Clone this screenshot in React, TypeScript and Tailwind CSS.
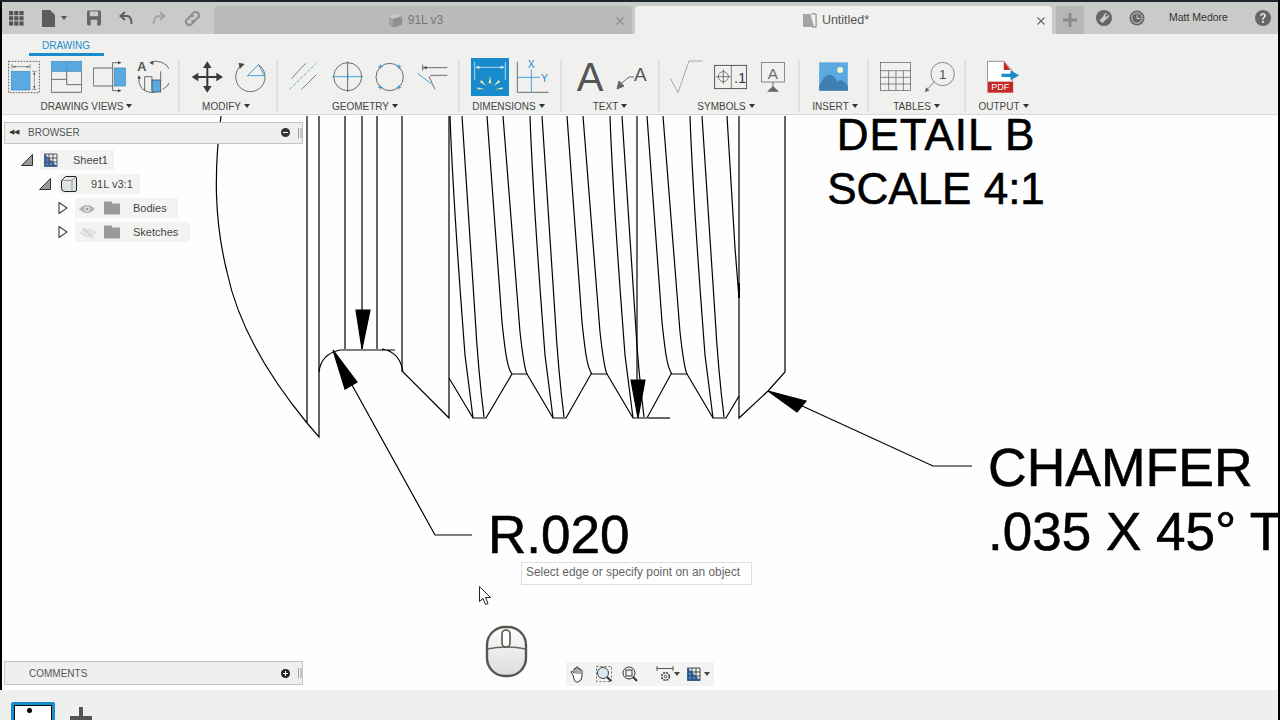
import type { ReactNode } from "react";

const FONT = "font-['Liberation_Sans',Arial,sans-serif]";
const BLUE = "#5aa9e0";
const CYAN = "#1b8ccb";
const DARK = "#4a4a4a";

// Icons are drawn in the 3x units of the zoomed toolbar, 114 units = 38px of row height
function Ic({ x, w, children, className = "" }: { x: number; w: number; className?: string; children: ReactNode }) {
  return (
    <svg
      viewBox={`${x} 174 ${w} 114`}
      width={w / 3}
      height={38}
      className={`shrink-0 ${className}`}
      fill="none"
      stroke={DARK}
      strokeWidth={2.4}
    >
      {children}
    </svg>
  );
}

function Caret() {
  return <span className="ml-[3px] inline-block h-0 w-0 border-x-[3px] border-t-[4px] border-x-transparent border-t-[#333] align-[2px]" />;
}

function Group({ cls, label, pad, lc = "", last, children }: { cls: string; label: string; pad: string; lc?: string; last?: boolean; children: ReactNode }) {
  return (
    <div className={`relative flex h-full shrink-0 flex-col ${cls}`}>
      <div className={`flex h-[38px] items-start ${pad}`}>{children}</div>
      <div className={`mt-[4px] text-center text-[10px] leading-[14px] text-[#444] ${lc}`}>
        {label}
        <Caret />
      </div>
      {!last && <div className="absolute right-[-1px] top-[2px] h-[52px] w-[2px] bg-[#dfe0de]" />}
    </div>
  );
}

function Cross({ className, color }: { className: string; color: string }) {
  return (
    <svg viewBox="0 0 8 8" className={`absolute h-[8px] w-[8px] ${className}`} fill="none" stroke={color} strokeWidth="1.1">
      <path d="M0.5 0.5L7.5 7.5M7.5 0.5L0.5 7.5" />
    </svg>
  );
}

function TitleIcons() {
  return (
    <div className="flex h-full w-[214px] shrink-0 items-center pl-[9px]">
      <svg viewBox="0 0 15 15" className="h-[15px] w-[15px]" fill="#555">
        {[0, 5.2, 10.4].flatMap((a) => [0, 5.2, 10.4].map((b) => <rect key={`${a}-${b}`} x={a} y={b} width="4.2" height="4.2" />))}
      </svg>
      <svg viewBox="0 0 13 17" className="ml-[18px] h-[17px] w-[13px]" fill="#5c5c5c">
        <path d="M0 0H8L13 5V17H0Z" />
      </svg>
      <span className="ml-[6px] h-0 w-0 border-x-[3px] border-t-[4px] border-x-transparent border-t-[#555]" />
      <svg viewBox="0 0 15 16" className="ml-[20px] h-[16px] w-[14px]" fill="#666">
        <path fillRule="evenodd" d="M1.5 0H13.5A1.5 1.5 0 0 1 15 1.5V14.5A1.5 1.5 0 0 1 13.5 16H1.5A1.5 1.5 0 0 1 0 14.5V1.5A1.5 1.5 0 0 1 1.5 0ZM3 1V6H12V1ZM4 10V16H11V10Z" />
      </svg>
      <svg viewBox="0 0 14 14" className="ml-[18px] h-[14px] w-[14px]" fill="none" stroke="#5c5c5c" strokeWidth="2">
        <path d="M6 1L1.5 5L6 9" />
        <path d="M2 5H8Q12.5 5 12.5 13" />
      </svg>
      <svg viewBox="0 0 14 14" className="ml-[19px] h-[14px] w-[14px]" fill="none" stroke="#a3a5a3" strokeWidth="2">
        <path d="M8 1L12.5 5L8 9" />
        <path d="M12 5H7Q2 5 1.5 13" />
      </svg>
      <svg viewBox="0 0 17 17" className="ml-[18px] h-[17px] w-[17px]" fill="none" stroke="#8e908e" strokeWidth="2.2">
        <path d="M7 5L10 2.5Q12 1 14 3T14.5 7L11 10.5Q9 12 7.5 10.5" />
        <path d="M10 12L7 14.5Q5 16 3 14T2.5 10L6 6.5Q8 5 9.5 6.5" />
      </svg>
    </div>
  );
}

function Tabs() {
  return (
    <div className="flex h-[32px] items-end bg-[#c9cbc8]">
      <TitleIcons />
      <div className="relative flex h-[28px] w-[418px] items-center justify-center rounded-t-[4px] bg-[#b9bbb9] pr-[15px]">
        <svg viewBox="0 0 16 15" className="mr-[5px] h-[15px] w-[15px]">
          <path d="M1 3L11 0L15 3L5 6Z" fill="#c6c8c6" />
          <path d="M1 3L5 6V15L1 12Z" fill="#a3a5a3" />
          <path d="M5 6L15 3V12L5 15Z" fill="#8f918f" />
        </svg>
        <span className="text-[12px] text-[#777]">91L v3</span>
        <Cross className="right-[8px] top-[11px]" color="#8a8c8a" />
      </div>
      <div className="relative ml-[3px] flex h-[28px] w-[417px] items-center justify-center rounded-t-[4px] bg-[#f0f1ef] pr-[16px]">
        <svg viewBox="0 0 16 16" className="mr-[5px] h-[15px] w-[15px]">
          <path d="M1 1H9L13 15H1Z" fill="#a3a5a3" />
          <path d="M10 1H15M15 1V15M11 15H15" stroke="#777" fill="none" />
        </svg>
        <span className="text-[12.5px] text-[#555]">Untitled*</span>
        <Cross className="right-[7px] top-[11px]" color="#666" />
      </div>
      <div className="ml-[4px] flex h-[28px] w-[28px] items-center justify-center bg-[#b5b7b5]">
        <svg viewBox="0 0 14 14" className="h-[14px] w-[14px]" fill="#8a8c8a">
          <path d="M5.5 0H8.5V5.5H14V8.5H8.5V14H5.5V8.5H0V5.5H5.5Z" />
        </svg>
      </div>
      <div className="flex h-[32px] flex-1 items-center">
        <svg viewBox="0 0 16 16" className="ml-[12px] h-[16px] w-[16px]">
          <circle cx="8" cy="8" r="8" fill="#666" />
          <path d="M11.5 3L9 5.5L10.5 7L13 4.5Q13.5 7.5 11 8.5L6.5 13L3.5 10.5L7.5 6Q8 2.8 11.5 3Z" fill="#c9cbc8" />
        </svg>
        <svg viewBox="0 0 16 16" className="ml-[17px] h-[16px] w-[16px]" fill="none">
          <circle cx="8" cy="8" r="7.5" fill="#666" />
          <circle cx="8" cy="8" r="5.3" stroke="#c9cbc8" strokeWidth="1" />
          <path d="M8 4.5V8.5H11.5" stroke="#c9cbc8" strokeWidth="1" />
        </svg>
        <span className="ml-[24px] text-[10.5px] text-[#333]">Matt Medore</span>
        <svg viewBox="0 0 16 16" className="ml-[27px] h-[16px] w-[16px]">
          <circle cx="8" cy="8" r="8" fill="#666" />
          <path d="M5.2 6Q5.4 3 8 3T10.9 5.7Q10.9 7 9.4 7.9Q8.6 8.5 8.6 10H7.1Q7.1 7.9 8.4 7Q9.2 6.4 9.2 5.7T8 4.6T6.8 6ZM7 11H8.8V13H7Z" fill="#e4e5e3" />
        </svg>
      </div>
    </div>
  );
}

function Ribbon() {
  return (
    <div className="h-[81px] border-b border-[#d8d8d6] bg-[#f0f1ef]">
      <div className="relative h-[23px]">
        <span className="absolute left-[42px] top-[4px] text-[10px] text-[#1b8ccb]">DRAWING</span>
        <span className="absolute bottom-[1px] left-[29px] h-[3px] w-[75px] bg-[#1b8ccb]" />
      </div>
      <div className="flex h-[58px] items-start pt-[1px]">
        <Group cls="w-[179px]" label="DRAWING VIEWS" pad="pl-[8px]" lc="pr-[6px]">
          <Ic x={24} w={96}>
            <rect x="26" y="184" width="92" height="94" strokeDasharray="5 4" stroke="#333" />
            <rect x="34" y="214" width="56" height="56" fill={BLUE} stroke="#4b8fc0" />
            <path d="M38 200H88M36 192V208M90 192V208M103 216V266M96 214H110M96 268H110" strokeWidth="1.6" />
            <path d="M38 200L46 197V203ZM88 200L80 197V203ZM103 216L100 224H106ZM103 266L100 258H106Z" fill={DARK} strokeWidth="0" />
          </Ic>
          <Ic x={153} w={94} className="ml-[11px]">
            <rect x="154" y="184" width="91" height="30" fill={BLUE} stroke="#4b8fc0" />
            <path d="M200 184V214" stroke="#4b8fc0" />
            <path d="M154 214V277H245V214M154 238H200V254H245M200 214V238" />
          </Ic>
          <Ic x={281} w={98} className="ml-[11px]">
            <path d="M340 204H282V258H340" />
            <rect x="345" y="204" width="33" height="54" fill={BLUE} stroke="#4b8fc0" />
            <path d="M340 188V272M340 188H358M340 272H358" />
            <path d="M367 188L356 183V193ZM367 272L356 267V277Z" fill={DARK} strokeWidth="0" />
          </Ic>
          <Ic x={410} w={100} className="ml-[10px]">
            <text x="414" y="213" fontSize="38" fontWeight="700" fill="#555" stroke="none" fontFamily="Liberation Sans">A</text>
            <path d="M452 188A44 44 0 0 1 490 268M478 272Q450 285 428 266Q416 252 419 232" />
            <path d="M450 188L462 182V195ZM419 225L414 236H425Z" fill={DARK} strokeWidth="0" />
            <path d="M436 272V230H458V272" />
            <rect x="458" y="240" width="26" height="36" fill={BLUE} />
            <path d="M484 240V214" />
          </Ic>
        </Group>
        <Group cls="w-[98px]" label="MODIFY" pad="pl-[12px]" lc="pr-[4px]">
          <Ic x={572} w={98}>
            <path d="M621 190V272M580 231H662" strokeWidth="6" stroke="#3a3a3a" />
            <path d="M621 184L608 204H634ZM621 278L608 258H634ZM574 231L594 218V244ZM668 231L648 218V244Z" fill="#3a3a3a" stroke="none" />
          </Ic>
          <Ic x={702} w={96} className="ml-[10px]">
            <path d="M722 198A44 44 0 1 0 775 194" />
            <path d="M716 188L734 192L719 207Z" fill={DARK} strokeWidth="0" />
            <path d="M742 227L776 194L793 227Z" stroke={CYAN} />
          </Ic>
        </Group>
        <Group cls="w-[182px]" label="GEOMETRY" pad="pl-[12px]" lc="pr-[6px]">
          <Ic x={868} w={86}>
            <path d="M875 236L918 190M906 268L950 224" strokeWidth="2" />
            <path d="M870 268L950 190" stroke={CYAN} strokeWidth="2" strokeDasharray="10 5" />
          </Ic>
          <Ic x={30} w={100} className="ml-[13px]">
            <circle cx="80" cy="230" r="42" />
            <path d="M80 184V276" stroke={DARK} />
            <path d="M34 230H126M80 221V239" stroke={CYAN} />
          </Ic>
          <Ic x={163} w={94} className="ml-[10px]">
            <circle cx="210" cy="231" r="41" />
            <path d="M175 200H189M182 193V207M231 200H245M238 193V207M175 262H189M182 255V269M231 262H245M238 255V269" stroke={CYAN} />
          </Ic>
          <Ic x={290} w={98} className="ml-[11px]">
            <path d="M310 203H384M310 194V212M335 226H384M335 226L330 232L347 268" />
            <path d="M310 203L322 198V208Z" fill={DARK} strokeWidth="0" />
            <path d="M295 220L336 252" stroke={CYAN} />
          </Ic>
        </Group>
        <Group cls="w-[102px]" label="DIMENSIONS" pad="pl-[12px]" lc="pr-[3px]">
          <svg viewBox="453 174 114 114" width={38} height={38} className="shrink-0" fill="none">
            <rect x="453" y="174" width="114" height="114" fill="#188bcc" />
            <path d="M464 186V240M556 186V240M468 202H552" stroke="#d8ebf5" strokeWidth="2.4" />
            <path d="M466 202L478 197V207ZM554 202L542 197V207Z" fill="#d8ebf5" />
            <path d="M510 228L506 250H514ZM484 240L480 246L499 258ZM536 240L540 246L521 258ZM472 268H494L472 262ZM548 268H526L548 262Z" fill="#f3eba6" />
          </svg>
          <Ic x={588} w={102} className="ml-[7px]">
            <path d="M592 185V277H686" />
            <path d="M634 208V277M592 232H660" stroke={CYAN} />
            <text x="623" y="205" fontSize="31" fill={CYAN} stroke="none" fontFamily="Liberation Sans">X</text>
            <text x="663" y="245" fontSize="31" fill={CYAN} stroke="none" fontFamily="Liberation Sans">Y</text>
          </Ic>
        </Group>
        <Group cls="w-[98px]" label="TEXT" pad="pl-[14px]">
          <div className="h-[38px] w-[30px] text-center text-[40px] leading-[39px] text-[#555]">A</div>
          <svg viewBox="0 -4 32 30" width={32} height={30} className="ml-[11px] mt-[4px] shrink-0" fill="none" stroke="#666" strokeWidth="1">
            <path d="M2 20L13 11H18" />
            <path d="M1 23L3 15L8 20Z" fill="#666" />
            <text x="18" y="15" fontSize="19" fill="#555" stroke="none" fontFamily="Liberation Sans">A</text>
          </svg>
        </Group>
        <Group cls="w-[140px]" label="SYMBOLS" pad="pl-[10px]" lc="pr-[6px]">
          <Ic x={88} w={104}>
            <path d="M92 235L115 278L148 183H188" strokeWidth="1.6" stroke="#666" />
          </Ic>
          <Ic x={220} w={100} className="ml-[10px]">
            <rect x="222" y="196" width="96" height="70" stroke="#333" />
            <path d="M272 196V266M248 208V252M226 230H270" stroke="#333" strokeWidth="1.8" />
            <circle cx="248" cy="230" r="15" stroke="#333" strokeWidth="1.8" />
            <text x="280" y="249" fontSize="44" fill="#333" stroke="none" fontFamily="Liberation Sans">.1</text>
          </Ic>
          <Ic x={362} w={72} className="ml-[14px]">
            <rect x="364" y="187" width="68" height="59" stroke="#555" strokeWidth="2" />
            <text x="382" y="236" fontSize="46" fill="#666" stroke="none" fontFamily="Liberation Sans">A</text>
            <path d="M398 246V260" />
            <path d="M380 275H416L398 258Z" fill="#666" stroke="none" />
          </Ic>
        </Group>
        <Group cls="w-[69px]" label="INSERT" pad="pl-[20px]" lc="pl-[3px]">
          <svg viewBox="537 174 86 114" width={29} height={38} className="shrink-0">
            <rect x="537" y="187" width="86" height="85" fill={BLUE} />
            <path d="M537 258Q552 226 567 224Q582 224 592 246Q604 232 623 258V272H537Z" fill="#3f7fb3" />
            <circle cx="600" cy="210" r="9" fill="#f1f6c8" />
          </svg>
        </Group>
        <Group cls="w-[97px]" label="TABLES" pad="pl-[12px]">
          <Ic x={720} w={94}>
            <rect x="721" y="187" width="91" height="85" stroke="#555" strokeWidth="2" />
            <path d="M721 212H812M721 232H812M721 252H812M746 212V272M768 212V272M790 212V272" stroke="#555" strokeWidth="2" />
          </Ic>
          <Ic x={850} w={94} className="ml-[13px]">
            <circle cx="906" cy="222" r="35" stroke="#555" strokeWidth="2" />
            <path d="M880 246L860 268" stroke="#666" />
            <path d="M852 276L857 262L866 272Z" fill="#666" stroke="none" />
            <text x="895" y="236" fontSize="40" fill="#555" stroke="none" fontFamily="Liberation Sans">1</text>
          </Ic>
        </Group>
        <Group cls="w-[75px]" label="OUTPUT" pad="pl-[22px]" lc="pl-[2px]" last>
          <svg viewBox="1040 174 98 114" width={33} height={38} className="shrink-0" fill="none">
            <path d="M1041 245V184H1090L1115 210V245" stroke="#666" strokeWidth="2" fill="#fff" />
            <path d="M1090 184V210H1110Z" fill="#c62828" />
            <rect x="1041" y="245" width="77" height="33" fill="#c62828" />
            <text x="1052" y="271" fontSize="27" fill="#fff" fontFamily="Liberation Sans">PDF</text>
            <path d="M1083 226H1112" stroke="#1b8ccb" strokeWidth="10" />
            <path d="M1136 226L1110 211V241Z" fill="#1b8ccb" />
          </svg>
        </Group>
      </div>
    </div>
  );
}

// thread flanks repeat every 80px across the drawing
const FLANK_A = "M450 116C453 200 458 262 465 355L473 418";
const FLANK_B = "M462 116L475 315C477 350 480 385 484 417";
const FLANK_C = "M487 116L502 322C505 350 507 368 512 374";
const FLANK_D = "M503 116L520 332C522 350 524 368 527 374";

function Drawing() {
  return (
    <svg viewBox="0 115 1280 575" className="absolute inset-0 h-full w-full" fill="none" stroke="#000" strokeWidth="1.2">
      <path d="M221 116C214 170 214 220 227 272C237 320 265 372 307 423L319 437V116M307 116V423" />
      <path d="M319 372Q321 354 340 350H395M382 349Q400 352 403 372L449 418V116" />
      <path d="M345 116V349M362 116V349M377 116V349M402 116V372" />
      <path d="M356 310H370L362 349Z" fill="#000" />
      <path d="M333 350L345 389L357 382Z" fill="#000" />
      <path d="M352 385L435 535H472" />
      {[0, 80, 160].map((dx) => (
        <g key={dx} transform={`translate(${dx} 0)`}>
          <path d={FLANK_A} />
          <path d={FLANK_B} />
          <path d={FLANK_C} />
          <path d={FLANK_D} />
        </g>
      ))}
      <g transform="translate(240 0)">
        <path d={FLANK_A} />
        <path d={FLANK_B} />
        <path d="M487 116L495 248L499 298" />
      </g>
      <path d="M449 378L473 418H486L512 374H527L553 418H566L591 374H607L633 418H647L671 374H687L713 418H726L739 396" />
      <path d="M739 116V418L768 391L785 372V116" />
      <path d="M739 283V298" strokeWidth="2" />
      <path d="M637 116V380" />
      <path d="M631 380H645L638 418Z" fill="#000" />
      <path d="M648 418H670" />
      <path d="M768 391L806 401L797 412Z" fill="#000" />
      <path d="M800 405L933 466H972" />
      <g fill="#000" stroke="#000" strokeWidth="0.6" fontFamily="Liberation Sans">
        <text x="936" y="150" fontSize="44" textAnchor="middle" letterSpacing="1">DETAIL B</text>
        <text x="936" y="204" fontSize="44" textAnchor="middle">SCALE 4:1</text>
        <text x="988" y="486" fontSize="53.5">CHAMFER</text>
        <text x="988" y="550" fontSize="53">.035 X 45° T</text>
        <text x="488" y="553" fontSize="53">R.020</text>
      </g>
    </svg>
  );
}

function Row({ cls, box, label, labelCls, children }: { cls: string; box: string; label: string; labelCls: string; children: ReactNode }) {
  return (
    <div className={`flex h-[24px] items-center ${cls}`}>
      {children}
      <div className={`relative ml-[7px] h-[20px] bg-[#f3f4f2] ${box}`}>
        <span className={`absolute top-[2px] text-[11px] text-[#444] ${labelCls}`}>{label}</span>
      </div>
    </div>
  );
}

const Open = () => (
  <svg viewBox="0 0 12 12" className="h-[12px] w-[12px]">
    <path d="M11.5 0.5V11.5H0.5Z" fill="#9a9a9a" stroke="#333" />
  </svg>
);
const Closed = () => (
  <svg viewBox="0 0 10 12" className="-ml-[1px] h-[12px] w-[10px]">
    <path d="M1 0.5L9 6L1 11.5Z" fill="#fff" stroke="#444" strokeWidth="1.2" />
  </svg>
);
const Grip = () => (
  <svg viewBox="0 0 4 10" className="ml-[8px] h-[10px] w-[4px]" stroke="#888" strokeWidth="0.8">
    <path d="M0.5 0V10M3 0V10" />
  </svg>
);
const Folder = () => (
  <svg viewBox="0 0 16 13" className="h-[14px] w-[16px]" fill="#9b9c9a">
    <path d="M0 0H8V2H16V13H0Z" />
  </svg>
);

function BrowserPanel() {
  return (
    <div className="absolute bottom-[5px] left-[4px] top-[7px] flex w-[299px] flex-col">
      <div className="flex h-[22px] items-center border border-[#c4c5c3] bg-[#eff0ee] pb-[1px] pl-[4px]">
        <span className="mr-[9px] text-[7px] text-[#333]">◀◀</span>
        <span className="flex-1 text-[10px] text-[#555]">BROWSER</span>
        <span className="relative h-[9px] w-[9px] rounded-full bg-[#333]">
          <span className="absolute left-[2px] top-[4px] h-[1px] w-[5px] bg-white" />
        </span>
        <Grip />
      </div>
      <div className="mt-[4px] flex flex-col">
        <Row cls="ml-[17px]" box="w-[74px]" label="Sheet1" labelCls="left-[33px]">
          <Open />
        </Row>
        <Row cls="ml-[35px]" box="w-[82px]" label="91L v3:1" labelCls="left-[33px]">
          <Open />
        </Row>
        <Row cls="ml-[55px]" box="w-[103px]" label="Bodies" labelCls="left-[58px]">
          <Closed />
        </Row>
        <Row cls="ml-[55px]" box="w-[115px]" label="Sketches" labelCls="left-[58px]">
          <Closed />
        </Row>
      </div>
      {/* row icons sit over the tree rows */}
      <svg viewBox="0 0 14 14" className="absolute left-[40px] top-[31px] h-[14px] w-[14px]" fill="none">
        <path d="M0 0V14H14Z" fill="#4d7fd0" />
        <path d="M1 1H13V13H1ZM5 1V13M9 1V13M1 5H13M1 9H13" stroke="#444" strokeWidth="0.9" />
      </svg>
      <svg viewBox="0 0 16 16" className="absolute left-[57px] top-[54px] h-[16px] w-[16px]" fill="none">
        <path d="M0.5 4.5L4.5 0.5H14Q15.5 0.5 15.5 2V14Q15.5 15.5 14 15.5H4Q0.5 15.5 0.5 12Z" fill="#dfe3e5" stroke="#222" />
        <path d="M0.5 4.5H11V15.5M11 4.5L15 1" stroke="#777" strokeWidth="0.7" />
      </svg>
      <svg viewBox="0 0 16 10" className="absolute left-[75px] top-[82px] h-[10px] w-[16px]">
        <path d="M0 5Q8 -3 16 5Q8 13 0 5Z" fill="#b3b4b2" />
        <circle cx="8" cy="5" r="2.6" fill="#f3f4f2" />
        <circle cx="8" cy="5" r="1.5" fill="#999" />
      </svg>
      <div className="absolute left-[100px] top-[79px]">
        <Folder />
      </div>
      <svg viewBox="0 0 16 12" className="absolute left-[76px] top-[105px] h-[12px] w-[16px]" stroke="#dcdddb" fill="#e6e7e5">
        <path d="M0 6Q8 -2 16 6Q8 14 0 6Z" />
        <path d="M3 1L13 11" stroke="#cfd0ce" strokeWidth="1.5" />
      </svg>
      <div className="absolute left-[100px] top-[103px]">
        <Folder />
      </div>

      <div className="mt-auto flex h-[24px] items-center border border-[#c4c5c3] bg-[#eff0ee] pl-[24px]">
        <span className="flex-1 text-[10px] text-[#555]">COMMENTS</span>
        <span className="relative h-[9px] w-[9px] rounded-full bg-[#222]">
          <span className="absolute left-[2px] top-[4px] h-[1px] w-[5px] bg-white" />
          <span className="absolute left-[4px] top-[2px] h-[5px] w-[1px] bg-white" />
        </span>
        <Grip />
      </div>
    </div>
  );
}

function NavBar() {
  return (
    <div className="absolute bottom-[4px] left-[566px] flex h-[24px] w-[148px] items-center bg-[#f3f4f2] pl-[3px]">
      <svg viewBox="0 0 16 17" className="ml-[1px] h-[17px] w-[16px]" fill="#fff" stroke="#333" strokeWidth="1">
        <path d="M3 9L1 6Q1 5 2.5 5.5L4 7V3Q5 1.5 6 3V1.5Q7 0 8 1.5V2.5Q9.5 1.5 10 3V4Q11.5 3 12 4.5V10Q12 15 8 16H6Q4 15.5 3 9Z" />
        <path d="M6 3V8M8 2.5V8M10 4V8" strokeWidth="0.8" />
      </svg>
      <svg viewBox="0 0 16 16" className="ml-[10px] h-[16px] w-[16px]" fill="none">
        <rect x="0.5" y="0.5" width="15" height="15" stroke="#666" strokeDasharray="2 2" />
        <circle cx="7" cy="7" r="5.5" fill="#dbe9f0" stroke="#444" />
        <path d="M11 11L15 15" stroke="#333" strokeWidth="2" />
      </svg>
      <svg viewBox="0 0 16 16" className="ml-[10px] h-[16px] w-[16px]" fill="none" stroke="#333">
        <circle cx="7" cy="7" r="6" />
        <rect x="4" y="4" width="6" height="6" />
        <path d="M11 11L15 15" strokeWidth="2" />
      </svg>
      <svg viewBox="0 0 18 16" className="ml-[18px] h-[16px] w-[18px]" fill="none" stroke="#444">
        <path d="M1 0V5M17 0V5M1 2.5H17" strokeWidth="0.9" />
        <circle cx="9.5" cy="10.5" r="3.8" strokeDasharray="2 1" strokeWidth="1.6" />
        <circle cx="9.5" cy="10.5" r="1.2" />
      </svg>
      <span className="h-0 w-0 border-x-[3px] border-t-[4px] border-x-transparent border-t-[#444]" />
      <svg viewBox="0 0 14 14" className="ml-[7px] h-[14px] w-[14px]" fill="none">
        <path d="M0 0V14H14Z" fill="#3f86d6" />
        <path d="M1 1H13V13H1ZM5 1V13M9 1V13M1 5H13M1 9H13" stroke="#333" strokeWidth="0.9" />
      </svg>
      <span className="ml-[3px] h-0 w-0 border-x-[3px] border-t-[4px] border-x-transparent border-t-[#444]" />
    </div>
  );
}

function MouseHint() {
  return (
    <svg viewBox="0 0 44 54" className="absolute left-[485px] top-[510px] h-[54px] w-[44px]" fill="none">
      <defs>
        <linearGradient id="mouseFill" x1="0" y1="0" x2="0" y2="1">
          <stop offset="0" stopColor="#fcfcfc" />
          <stop offset="1" stopColor="#dcdddb" />
        </linearGradient>
      </defs>
      <rect x="2" y="2" width="39" height="49" rx="18" fill="url(#mouseFill)" stroke="#55564f" strokeWidth="2.4" />
      <path d="M2.5 24Q21 20 40.5 24" stroke="#66675f" strokeWidth="1.4" />
      <rect x="17" y="5" width="8" height="17" rx="4" fill="#fff" stroke="#55564f" strokeWidth="1.6" />
    </svg>
  );
}

export default function App() {
  return (
    <div className={`${FONT} relative flex h-[720px] w-[1280px] flex-col overflow-hidden bg-[#fefefe]`}>
      <div className="h-[2px] bg-[#1c2530]" />
      <Tabs />
      <Ribbon />
      <div className="relative flex-1 bg-[#fefefe]">
        <Drawing />
        <BrowserPanel />
        <NavBar />
        <div className="absolute left-[521px] top-[447px] flex h-[23px] w-[231px] items-center border border-[#dddedc] bg-white pb-[2px] pl-[4px] text-[11.9px] text-[#666]">
          Select edge or specify point on an object
        </div>
        <svg viewBox="0 0 13 19" className="absolute left-[479px] top-[471px] h-[19px] w-[13px]" fill="#fff" stroke="#222">
          <path d="M0.5 0.5V15.5L4 12.5L6.5 18.5L9 17.5L6.5 11.5H11.5Z" />
        </svg>
        <MouseHint />
      </div>
      <div className="flex h-[30px] shrink-0 items-end bg-[#eef0ee] pl-[11px]">
        <div className="flex h-[18px] w-[44px] rounded-t-[3px] border-x-[3px] border-t-[3px] border-[#1b8ccb] bg-white">
          <div className="flex h-full w-full border-x border-t border-[#111] pl-[12px]">
            <span className="mt-[2px] h-[5px] w-[5px] rounded-full bg-black" />
          </div>
        </div>
        <svg viewBox="0 0 22 13" className="ml-[15px] h-[13px] w-[22px]" fill="#555">
          <path d="M9 0H13V9H22V13H0V9H9Z" />
        </svg>
      </div>
      <div className="absolute bottom-[30px] left-0 top-[2px] w-[2px] bg-black" />
      <div className="absolute bottom-0 right-0 top-0 w-[2px] bg-black" />
    </div>
  );
}
